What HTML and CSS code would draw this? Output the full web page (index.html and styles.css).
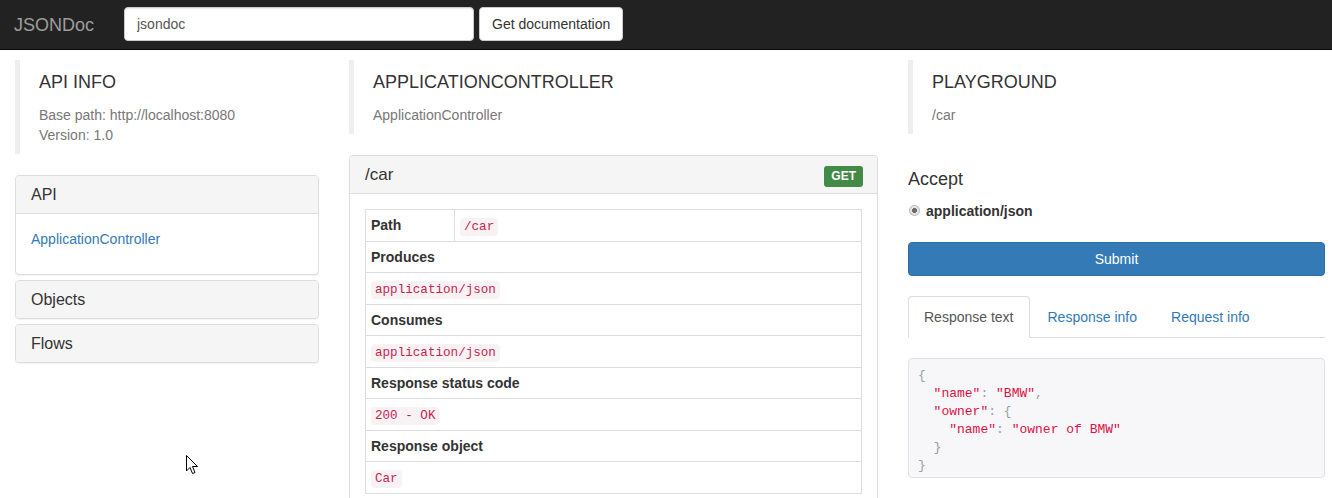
FILE: index.html
```html
<!DOCTYPE html>
<html>
<head>
<meta charset="utf-8">
<title>JSONDoc</title>
<link rel="stylesheet" href="styles.css">
</head>
<body>
<nav class="navbar">
  <span class="brand">JSONDoc</span>
  <form class="nav-form">
    <input class="url-input" type="text" value="jsondoc">
    <button class="btn-default" type="button">Get documentation</button>
  </form>
</nav>

<main class="layout">
  <section class="col">
    <blockquote class="bq">
      <h4 class="bq-title">API INFO</h4>
      <p class="bq-line">Base path: http://localhost:8080</p>
      <p class="bq-line">Version: 1.0</p>
    </blockquote>
    <div class="panel-group">
      <div class="panel">
        <div class="panel-heading"><h3 class="panel-title">API</h3></div>
        <div class="panel-body">
          <ul class="link-list"><li><a class="link" href="#">ApplicationController</a></li></ul>
        </div>
      </div>
      <div class="panel">
        <div class="panel-heading no-border"><h3 class="panel-title">Objects</h3></div>
      </div>
      <div class="panel">
        <div class="panel-heading no-border"><h3 class="panel-title">Flows</h3></div>
      </div>
    </div>
  </section>

  <section class="col">
    <blockquote class="bq">
      <h4 class="bq-title">APPLICATIONCONTROLLER</h4>
      <p class="bq-line">ApplicationController</p>
    </blockquote>
    <div class="panel">
      <div class="panel-heading method-heading">
        <h3 class="panel-title">/car</h3>
        <span class="label-get">GET</span>
      </div>
      <div class="panel-body">
        <table class="doc-table">
          <tr class="tall"><th class="key-cell">Path</th><td><code>/car</code></td></tr>
          <tr><th colspan="2">Produces</th></tr>
          <tr class="tall"><td colspan="2"><code>application/json</code></td></tr>
          <tr><th colspan="2">Consumes</th></tr>
          <tr class="tall"><td colspan="2"><code>application/json</code></td></tr>
          <tr><th colspan="2">Response status code</th></tr>
          <tr class="tall"><td colspan="2"><code>200 - OK</code></td></tr>
          <tr><th colspan="2">Response object</th></tr>
          <tr class="tall"><td colspan="2"><code>Car</code></td></tr>
        </table>
      </div>
    </div>
  </section>

  <section class="col">
    <blockquote class="bq">
      <h4 class="bq-title">PLAYGROUND</h4>
      <p class="bq-line">/car</p>
    </blockquote>
    <h4 class="accept-title">Accept</h4>
    <label class="radio-row"><span class="radio-dot"></span><b>application/json</b></label>
    <button class="btn-primary" type="button">Submit</button>
    <ul class="nav-tabs">
      <li class="tab active">Response text</li>
      <li class="tab"><a href="#">Response info</a></li>
      <li class="tab"><a href="#">Request info</a></li>
    </ul>
    <pre class="response"><span class="pun">{</span>
  <span class="str">"name"</span><span class="pun">:</span> <span class="str">"BMW"</span><span class="pun">,</span>
  <span class="str">"owner"</span><span class="pun">:</span> <span class="pun">{</span>
    <span class="str">"name"</span><span class="pun">:</span> <span class="str">"owner of BMW"</span>
  <span class="pun">}</span>
<span class="pun">}</span></pre>
  </section>
</main>

<svg class="cursor" width="13" height="20" viewBox="0 0 13 20" aria-hidden="true">
  <path d="M0.5 0.5 L0.5 16 L4 12.5 L6.5 18.5 L9 17.5 L6.5 11.5 L11.5 11.5 Z" fill="#fff" stroke="#000" stroke-width="1" stroke-linejoin="miter"/>
</svg>
</body>
</html>
```

FILE: styles.css
```css
* { box-sizing: border-box; }

html, body {
  margin: 0;
  padding: 0;
  background: #fff;
}

body {
  font-family: "Liberation Sans", Arial, Helvetica, sans-serif;
  font-size: 14px;
  line-height: 20px;
  color: #333;
  width: 1332px;
  height: 498px;
  overflow: hidden;
  position: relative;
}

/* navbar */
.navbar {
  height: 50px;
  background: #222;
  border-bottom: 1px solid #080808;
  display: flex;
  align-items: center;
  padding-left: 14px;
}

.brand {
  font-size: 18px;
  color: #9d9d9d;
  line-height: 20px;
  width: 110px;
}

.nav-form {
  display: flex;
  gap: 5px;
  margin-bottom: 1px;
}

.url-input {
  width: 350px;
  height: 34px;
  padding: 6px 12px;
  border: 1px solid #ccc;
  border-radius: 4px;
  font-family: inherit;
  font-size: 14px;
  color: #555;
  background: #fff;
  box-shadow: inset 0 1px 1px rgba(0,0,0,.075);
}

.btn-default {
  height: 34px;
  padding: 6px 12px;
  border: 1px solid #ccc;
  border-radius: 4px;
  background: #fff;
  color: #333;
  font-family: inherit;
  font-size: 14px;
}

/* layout */
.layout {
  display: grid;
  grid-template-columns: 304px 529px 417px;
  column-gap: 30px;
  padding-left: 15px;
  padding-top: 10px;
  align-items: start;
}

.col {
  min-width: 0;
  display: flex;
  flex-direction: column;
}

/* blockquote */
.bq {
  margin: 0 0 21px;
  padding: 12px 19px 9px 19px;
  border-left: 5px solid #eee;
}

.bq-title {
  margin: 0 0 13px;
  font-size: 18px;
  font-weight: 500;
  line-height: 20px;
  color: #333;
}

.bq-line {
  margin: 0;
  font-size: 14px;
  line-height: 20px;
  color: #777;
}

/* panels */
.panel {
  background: #fff;
  border: 1px solid #ddd;
  border-radius: 4px;
  box-shadow: 0 1px 1px rgba(0,0,0,.05);
  overflow: hidden;
}

.panel-group .panel + .panel { margin-top: 5px; }

.panel-heading {
  background: #f5f5f5;
  border-bottom: 1px solid #ddd;
  padding: 10px 15px;
  height: 38px;
}

.panel-heading.no-border {
  border-bottom: 0;
  height: 37px;
}

.panel-title {
  margin: 0;
  font-size: 16px;
  font-weight: 500;
  line-height: 17px;
  color: #333;
}

.method-heading {
  display: flex;
  justify-content: space-between;
  align-items: flex-start;
  padding-right: 14px;
  overflow: visible;
}

.method-heading .panel-title { font-size: 17px; }

.label-get {
  background: #428a46;
  color: #fff;
  font-size: 12px;
  font-weight: bold;
  line-height: 14px;
  padding: 3px 7px 4px;
  border-radius: 3px;
  margin-bottom: -4px;
}

.panel-body { padding: 15px; }

.link-list {
  list-style: none;
  margin: 0 0 10px;
  padding: 0;
}

.link {
  color: #337ab7;
  text-decoration: none;
}

/* table */
.doc-table {
  width: 100%;
  border-collapse: collapse;
}

.doc-table th,
.doc-table td {
  border: 1px solid #ddd;
  padding: 5px;
  text-align: left;
  line-height: 20px;
}

.doc-table th { font-weight: bold; }

.doc-table tr.tall th,
.doc-table tr.tall td { padding-bottom: 6px; }

.key-cell { width: 89px; }

code {
  font-family: "Liberation Mono", "Courier New", monospace;
  font-size: 12.6px;
  line-height: 1;
  padding: 2px 4px;
  color: #c7254e;
  background: #f9f2f4;
  border-radius: 4px;
}

/* playground */
.accept-title {
  margin: 14px 0 0;
  font-size: 18px;
  font-weight: 500;
  line-height: 20px;
  color: #333;
}

.radio-row {
  display: flex;
  align-items: center;
  margin-top: 12px;
  height: 20px;
  padding-left: 1px;
}

.radio-dot {
  width: 11px;
  height: 11px;
  border-radius: 50%;
  border: 1px solid #b5b5b5;
  background: radial-gradient(circle, #6b6b6b 0 2.2px, #e4e4e4 2.8px);
  margin-right: 6px;
  margin-top: -2px;
}

.btn-primary {
  display: block;
  width: 100%;
  height: 34px;
  margin-top: 21px;
  background: #337ab7;
  border: 1px solid #2e6da4;
  border-radius: 4px;
  color: #fff;
  font-family: inherit;
  font-size: 14px;
}

.nav-tabs {
  list-style: none;
  margin: 20px 0 0;
  padding: 0;
  display: flex;
  border-bottom: 1px solid #ddd;
  height: 42px;
}

.tab {
  padding: 10px 15px;
  margin-right: 2px;
  border: 1px solid transparent;
  border-radius: 4px 4px 0 0;
  line-height: 20px;
  margin-bottom: -1px;
}

.tab a {
  color: #337ab7;
  text-decoration: none;
}

.tab.active {
  color: #555;
  background: #fff;
  border-color: #ddd #ddd transparent;
}

.response {
  margin: 20px 0 0;
  padding: 8px 9px 2px;
  background: #f7f7f9;
  border: 1px solid #e1e1e8;
  border-radius: 4px;
  font-family: "Liberation Mono", "Courier New", monospace;
  font-size: 13px;
  line-height: 18px;
  color: #333;
}

.pun { color: #93a1a1; }
.str { color: #d14; }

.cursor {
  position: absolute;
  left: 186px;
  top: 455px;
}
```
